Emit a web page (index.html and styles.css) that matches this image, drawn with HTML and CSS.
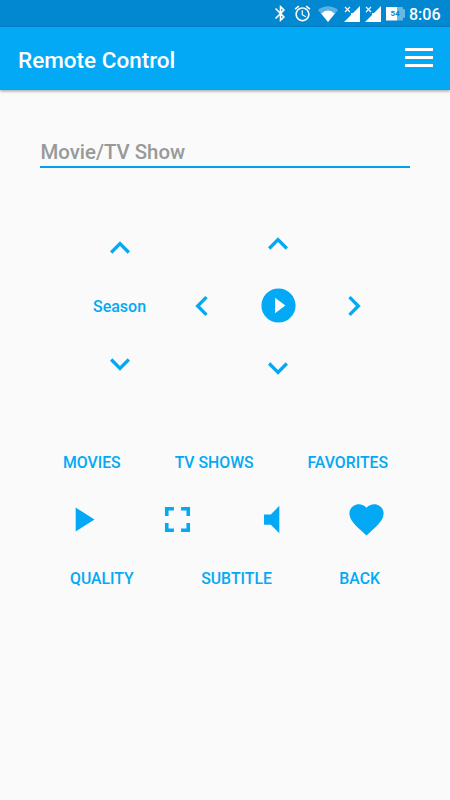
FILE: index.html
```html
<!DOCTYPE html>
<html lang="en">
<head>
    <meta charset="UTF-8">
    <meta name="viewport" content="width=device-width, initial-scale=1.0">
    <title>Remote Control</title>
    <link rel="stylesheet" href="styles.css">
</head>
<body>

    <div class="status-bar">
        <svg class="bluetooth" viewBox="0 0 24 24"><path d="M17.71 7.71L12 2h-1v7.59L6.41 5 5 6.41 10.59 12 5 17.59 6.41 19 11 14.41V22h1l5.71-5.71-4.3-4.29 4.3-4.29zM13 5.83l1.88 1.88L13 9.59V5.83zm1.88 10.46L13 18.17v-3.76l1.88 1.88z"/></svg>
        <svg class="alarm" viewBox="0 0 24 24"><path d="M22 5.72l-4.6-3.86-1.29 1.53 4.6 3.86L22 5.72zM7.88 3.39L6.6 1.86 2 5.71l1.29 1.53 4.59-3.85zM12.5 8H11v6l4.75 2.85.75-1.23-4-2.37V8zM12 4c-4.97 0-9 4.03-9 9s4.02 9 9 9c4.97 0 9-4.03 9-9s-4.03-9-9-9zm0 16c-3.87 0-7-3.13-7-7s3.13-7 7-7 7 3.13 7 7-3.13 7-7 7z"/></svg>
        <svg class="wifi" viewBox="0 0 20 16"><path opacity=".35" d="M0 4Q10-3.5 20 4L10 16z"/><path d="M3.2 7.5Q10 1.5 16.8 7.5L10 16z"/></svg>
        <svg class="signal" viewBox="0 0 16 16"><path d="M16 0v16H0L7 9V7h2z"/><path class="cross" d="M1 1l5 5M6 1L1 6"/></svg>
        <svg class="signal" viewBox="0 0 16 16"><path d="M16 0v16H0L7 9V7h2z"/><path class="cross" d="M1 1l5 5M6 1L1 6"/></svg>
        <span class="battery"><span>54</span></span>
        <span class="clock">8:06</span>
    </div>

    <div class="header">
        <h1>Remote Control</h1>
        <button class="menu-btn" aria-label="Menu"><span></span><span></span><span></span></button>
    </div>

    <div class="search">
        <input type="text" placeholder="Movie/TV Show">
    </div>

    <div class="controls">
        <!-- Season picker -->
        <div class="season">
            <button><svg viewBox="0 0 24 24"><path d="M12 8l-6 6 1.41 1.41L12 10.83l4.59 4.58L18 14z"/></svg></button>
            <span>Season</span>
            <button><svg viewBox="0 0 24 24"><path d="M16.59 8.59L12 13.17 7.41 8.59 6 10l6 6 6-6z"/></svg></button>
        </div>

        <!-- Direction pad -->
        <div class="dpad">
            <button class="up"><svg viewBox="0 0 24 24"><path d="M12 8l-6 6 1.41 1.41L12 10.83l4.59 4.58L18 14z"/></svg></button>
            <button class="left"><svg viewBox="0 0 24 24"><path d="M15.41 7.41L14 6l-6 6 6 6 1.41-1.41L10.83 12z"/></svg></button>
            <button class="ok"><svg viewBox="0 0 24 24"><path d="M12 2C6.48 2 2 6.48 2 12s4.48 10 10 10 10-4.48 10-10S17.52 2 12 2zm-2 14.5v-9l6 4.5-6 4.5z"/></svg></button>
            <button class="right"><svg viewBox="0 0 24 24"><path d="M10 6L8.59 7.41 13.17 12l-4.58 4.59L10 18l6-6z"/></svg></button>
            <button class="down"><svg viewBox="0 0 24 24"><path d="M16.59 8.59L12 13.17 7.41 8.59 6 10l6 6 6-6z"/></svg></button>
        </div>
    </div>

    <div class="row sections">
        <button>MOVIES</button>
        <button>TV SHOWS</button>
        <button>FAVORITES</button>
    </div>

    <div class="row player">
        <button><svg viewBox="0 0 24 24"><path d="M8 5v14l11-7z"/></svg></button>
        <button><svg class="fullscreen" viewBox="0 0 24 24"><path d="M7 14H5v5h5v-2H7v-3zm-2-4h2V7h3V5H5v5zm12 7h-3v2h5v-5h-2v3zM14 5v2h3v3h2V5h-5z"/></svg></button>
        <button class="volume"><svg viewBox="0 0 24 24"><path d="M7 9v6h4l5 5V4l-5 5H7z"/></svg></button>
        <button><svg viewBox="0 0 24 24"><path d="M12 21.35l-1.45-1.32C5.4 15.36 2 12.28 2 8.5 2 5.42 4.42 3 7.5 3c1.74 0 3.41.81 4.5 2.09C13.09 3.81 14.76 3 16.5 3 19.58 3 22 5.42 22 8.5c0 3.78-3.4 6.86-8.55 11.54L12 21.35z"/></svg></button>
    </div>

    <div class="row options">
        <button>QUALITY</button>
        <button>SUBTITLE</button>
        <button>BACK</button>
    </div>

</body>
</html>
```

FILE: styles.css
```css
* {
    margin: 0;
    padding: 0;
    box-sizing: border-box;
}

body {
    font-family: Roboto, sans-serif;
    background: #fafafa;
    color: #03a9f4;
    height: 800px;
    overflow: hidden;
}

svg {
    display: block;
    fill: currentColor;
}

button {
    background: none;
    border: none;
    color: inherit;
    font: inherit;
    cursor: pointer;
}

/* Status bar */
.status-bar {
    height: 27px;
    background: #0288d1;
    color: white;
    display: flex;
    align-items: center;
    justify-content: flex-end;
    padding-right: 9px;
}

.bluetooth {
    width: 19px;
    height: 19px;
    margin-right: 3px;
}

.alarm {
    width: 19px;
    height: 19px;
    margin-right: 6px;
}

.wifi {
    width: 20px;
    height: 16px;
    margin-right: 6px;
}

.signal {
    width: 16px;
    height: 16px;
    margin-right: 5px;
}

.cross {
    stroke: white;
    stroke-width: 1.1;
}

.battery {
    width: 19px;
    height: 14px;
    margin-right: 4px;
    background: linear-gradient(to right, white 58%, #67b8e3 58%);
    clip-path: polygon(0 0, 89% 0, 89% 20%, 100% 20%, 100% 80%, 89% 80%, 89% 100%, 0 100%);
    color: #0288d1;
    font-size: 8px;
    font-weight: 700;
    line-height: 14px;
    padding-right: 1px;
    text-align: center;
}

.clock {
    width: 32px;
    padding-top: 1px;
    font-size: 16px;
    font-weight: 500;
}

/* Header */
.header {
    height: 63px;
    background: #03a9f4;
    color: white;
    display: flex;
    align-items: center;
    justify-content: space-between;
    padding: 3px 17px 0 18px;
    box-shadow: 0 1px 3px rgba(0, 0, 0, 0.4);
}

.header h1 {
    font-size: 22.5px;
    font-weight: 500;
}

.menu-btn {
    width: 28px;
    display: grid;
    gap: 5px;
    margin-bottom: 5px;
}

.menu-btn span {
    height: 3px;
    background: white;
}

/* Search field */
.search {
    padding: 47px 40px 0;
}

.search input {
    display: block;
    width: 100%;
    height: 31px;
    background: none;
    border: none;
    border-bottom: 2px solid #03a0f0;
    outline: none;
    font-family: inherit;
    font-size: 20.4px;
    font-weight: 500;
    padding: 1px 0 0 0.5px;
}

.search input::placeholder {
    color: #999;
}

/* Season picker and direction pad */
.controls {
    display: flex;
    align-items: center;
    height: 163px;
    margin-top: 56px;
    padding-left: 79px;
}

.controls svg {
    width: 40px;
    height: 40px;
}

.season {
    width: 81px;
    display: flex;
    flex-direction: column;
    align-items: center;
    gap: 28px;
    font-size: 16px;
    font-weight: 500;
    line-height: 19px;
}

.season span {
    padding-top: 1px;
}

.dpad {
    display: grid;
    grid-template-columns: 76px 76px 76px;
    grid-template-rows: 40px 84px 40px;
    grid-template-areas: ". up ." "left ok right" ". down .";
    place-items: center;
    margin-left: 4px;
}

.up {
    grid-area: up;
}

.left {
    grid-area: left;
}

.ok {
    grid-area: ok;
}

.right {
    grid-area: right;
}

.down {
    grid-area: down;
}

.dpad .ok svg {
    width: 41px;
    height: 41px;
}

/* Button rows */
.row {
    display: flex;
    align-items: center;
    justify-content: space-between;
    font-size: 15.8px;
    font-weight: 500;
}

.sections {
    height: 30px;
    margin-top: 60px;
    padding: 0 62px 0 63px;
}

.player {
    height: 86px;
    padding: 0 63px 0 62px;
}

.player button {
    margin-bottom: 1px;
}

.player svg {
    width: 41px;
    height: 41px;
}

.player .fullscreen {
    width: 43px;
    height: 43px;
}

/* the speaker glyph is not centred in its box */
.player .volume {
    margin-left: -1px;
}

.options {
    height: 30px;
    padding: 0 70px;
}
```
